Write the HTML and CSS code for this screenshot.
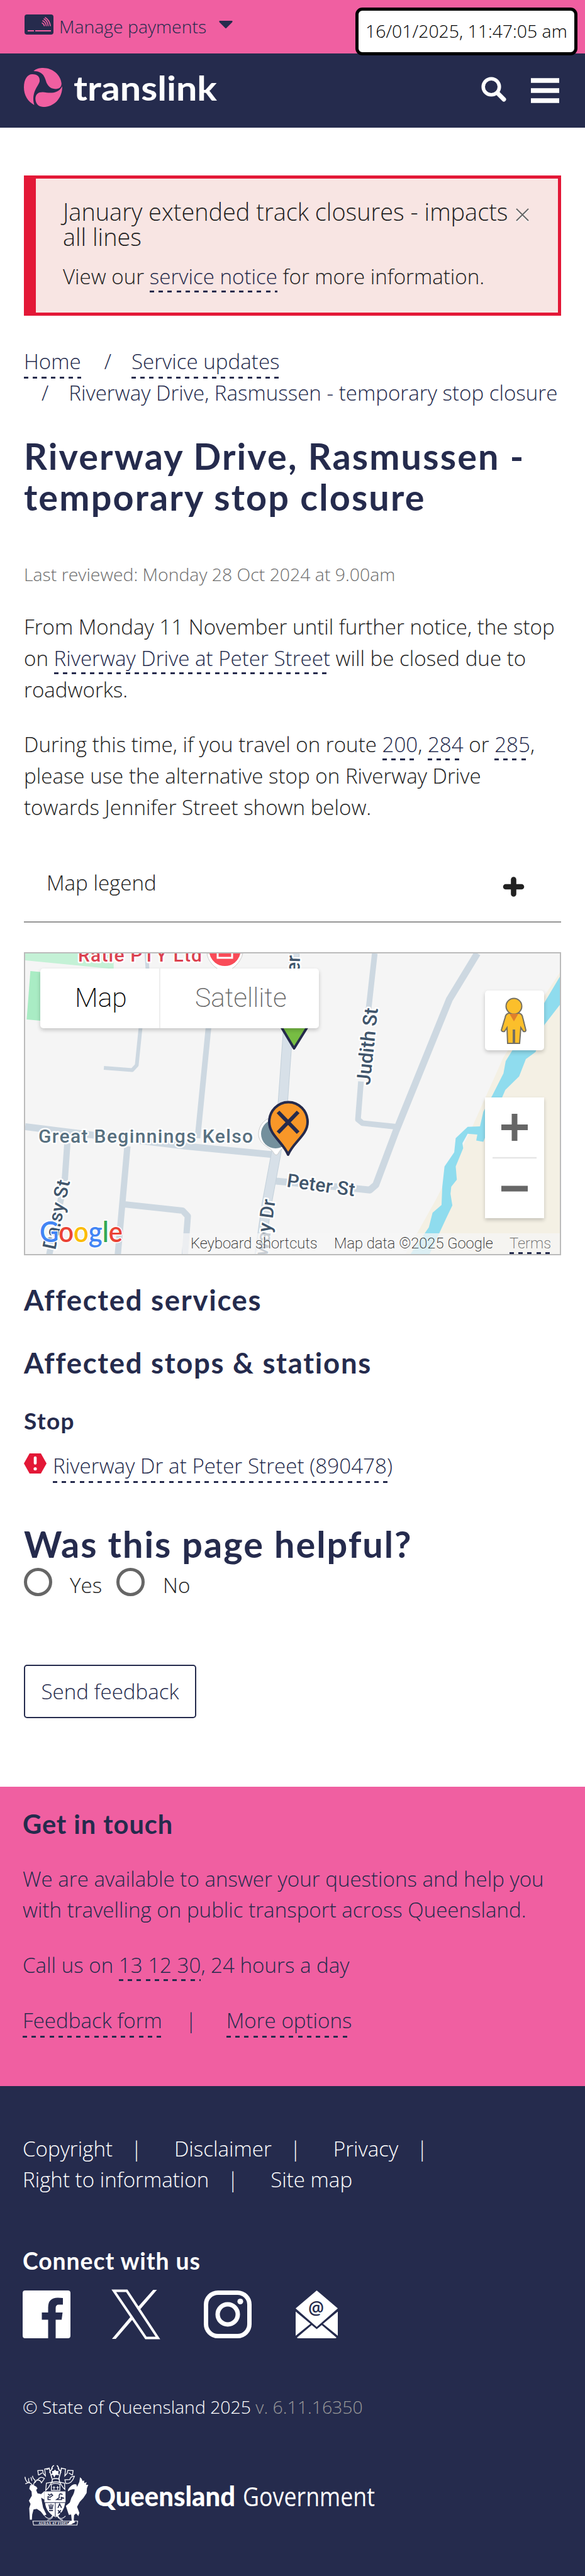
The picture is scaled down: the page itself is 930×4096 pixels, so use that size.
FILE: index.html
```html
<!DOCTYPE html>
<html lang="en">
<head>
<meta charset="utf-8">
<title>Riverway Drive, Rasmussen - temporary stop closure | Translink</title>
<link rel="stylesheet" href="styles.css">
</head>
<body>
<div class="topbar">
  <svg class="card-icon" viewBox="0 0 46 32"><rect width="46" height="32" rx="4" fill="#262b4d"/><g fill="none" stroke="#f05fa1" stroke-width="1.6" stroke-linecap="round"><path d="M28 13.500q3 1.500 3.500 4.500"/><path d="M29 10q5 2.500 5.500 8"/><path d="M31 7q6 4 6.500 11"/><path d="M33 5q7 4.500 8 13"/></g><path d="M5 26h10M17 26h25" stroke="#f05fa1" stroke-width="2.200"/></svg>
  <span class="manage">Manage payments</span>
  <svg class="caret" viewBox="0 0 22 12"><path d="M1.500 0h19q2 .5.500 2.500L12 11.500q-1 1-2 0L1 2.500Q-.5.500 1.500 0z" fill="#262b4d"/></svg>
  <div class="stamp">16/01/2025, 11:47:05 am</div>
</div>
<header class="header">
  <svg class="brand" viewBox="0 0 310 64">
    <g fill="#f05fa1" transform="scale(.61 .62)">
      <path d="M25 8C32 2 41 0 50 0C75 0 96 18 98 40C98 49 92 54 83 54C72 54 65 49 60 40C55 29 54 8 25 8z"/>
      <path d="M22 16C36 16 42 23 41 34C39 46 18 62 27 95C10 86 0 70 0 50C0 29 9 16 22 16z"/>
      <path d="M100 47C100 78 79 100 50 100C36 100 30 90 30 78C31 67 37 62 49 62C67 64 88 68 100 47z"/>
    </g>
    <text class="brand-text" x="79" y="51.500" textLength="228" lengthAdjust="spacingAndGlyphs">translink</text>
  </svg>
  <svg class="search" viewBox="0 0 40 40"><circle cx="16" cy="16" r="12.800" fill="none" stroke="#fff" stroke-width="5.600"/><path d="M26 26l10 10" stroke="#fff" stroke-width="7" stroke-linecap="round"/></svg>
  <svg class="burger" viewBox="0 0 45 40"><path d="M0 4h45M0 20h45M0 36h45" stroke="#fff" stroke-width="7.400"/></svg>
</header>
<main class="main">
  <section class="alert">
    <div class="alert-body">
      <h2 class="alert-title">January extended track closures - impacts<br>all lines</h2>
      <p class="alert-text">View our <a>service notice</a> for more information.</p>
    </div>
    <svg class="close" viewBox="0 0 22 22"><path d="M1 2.500l20 20M21 2.500l-20 20" stroke="#fff" stroke-width="2"/><path d="M1 1l20 20M21 1L1 21" stroke="#666" stroke-width="2"/></svg>
  </section>
  <nav class="crumbs">
    <div class="crumb-row"><a>Home</a><span class="slash">/</span><a>Service updates</a></div>
    <div class="crumb-row second"><span class="slash">/</span><span class="crumb-last">Riverway Drive, Rasmussen - temporary stop closure</span></div>
  </nav>
  <h1 class="title">Riverway Drive, Rasmussen -<br>temporary stop closure</h1>
  <p class="reviewed">Last reviewed: Monday 28 Oct 2024 at 9.00am</p>
  <p class="para p1">From Monday 11 November until further notice, the stop<br>on <a>Riverway Drive at Peter Street</a> will be closed due to<br>roadworks.</p>
  <p class="para p2">During this time, if you travel on route <a>200</a>, <a>284</a> or <a>285</a>,<br>please use the alternative stop on Riverway Drive<br>towards Jennifer Street shown below.</p>
  <div class="legend"><span>Map legend</span>
    <svg class="plus" viewBox="0 0 33 30"><path d="M16.500 3.500v23M4 15h25" stroke="#222" stroke-width="8.600" stroke-linecap="round"/></svg>
  </div>
  <div class="map">
    <svg class="map-art" viewBox="0 0 850 478">
      <rect width="850" height="478" fill="#f5f5f5"/>
      <g transform="translate(-40.300 -15.500) scale(.5931 .3221)">
        <path d="M68 48H305V125L68 82z" fill="#c4f1d6"/>
        <path d="M82 135L140 145L118 382L72 374z" fill="#a9ecc4"/>
        <path d="M1502 140L1350 560L1260 930L1170 1260L1085 1540H1502z" fill="#f4f0e4"/>
        <path d="M1502 160V300L1460 400L1436 535L1410 570L1392 655L1355 722L1325 850L1296 978L1277 972L1280 942L1254 938L1240 985L1242 1010L1222 1100L1225 1165L1210 1200L1208 1235L1213 1292L1198 1350L1150 1540H1098L1150 1400L1160 1328L1184 1290L1186 1200L1192 1100L1218 1030L1222 960L1254 904L1287 902L1296 830L1320 750L1350 640L1356 580L1376 520L1460 290z" fill="#8fdcee"/>
        <g class="road" fill="none" stroke="#cdd8e1">
          <path d="M393 48L396 130M378 400L367 600L355 624L279 613" stroke-width="6"/>
          <path d="M560 400L530 960M1005 48L988 330M968 680L960 868L972 886L1065 904" stroke-width="9"/>
          <path d="M1280 48L1205 275L1062 925L1008 1190L992 1216L950 1208L740 1172" stroke-width="11"/>
          <path d="M68 903L250 945L500 1000L735 1042" stroke-width="11"/>
          <path d="M181 985L174 1170L132 1540M342 1000L316 1540M330 1286L490 1318L504 1345L496 1540" stroke-width="10"/>
        </g>
        <g fill="none"><path class="road" d="M790 48L772 440L758 800L740 1042L715 1290L696 1540" stroke="#c3d0da" stroke-width="16"/><path class="road" d="M790 48L772 440L758 800L740 1042L715 1290L696 1540" stroke="#d7e0e8" stroke-width="14"/></g>
      </g>
      <g class="map-label">
        <text x="84" y="12.500" fill="#db4150" font-size="30" textLength="197">Ratie PTY Ltd</text>
        <path d="M289 0C291 16 308 28 318 30C330 26 343 14 346 0z" fill="#fff" stroke="#ccc"/><path d="M293 0a25 25 0 0 0 49 0z" fill="#f94b58"/><path d="M306 0v7h23v-7" fill="none" stroke="#fff" stroke-width="3"/>
        <text transform="translate(436 33) rotate(-88)" x="-13" font-size="31">ver</text>
        <text transform="translate(548 210) rotate(-84)" font-size="31" textLength="123">Judith St</text>
        <text transform="translate(415 371) rotate(8)" font-size="30" textLength="109">Peter St</text>
        <text transform="translate(48 472) rotate(-78)" font-size="30" textLength="112">Daisy St</text>
        <text transform="translate(385 482) rotate(-82)" font-size="30">way Dr</text>
        <text x="21" y="301" font-size="30" fill="#587080" textLength="341">Great Beginnings Kelso</text>
      </g>
      <path d="M371 287a27 27 0 0 1 54 0C425 305 406 308 403 317q-4 7-8 0C390 307 371 305 371 287z" fill="#fff" stroke="#ccc"/>
      <circle cx="398" cy="287" r="23" fill="#74909d"/>
      <path d="M403 110L427.500 151L453 110z" fill="#77bd43" stroke="#252b4d" stroke-width="4" stroke-linejoin="round"/>
      <path d="M418 320C410 300 388 289 388 268a30 31 0 0 1 61 0C449 289 426 300 418 320z" fill="#f89728" stroke="#252b4d" stroke-width="4" stroke-linejoin="round"/>
      <path d="M402 252l32 33M434 252l-32 33" stroke="#252b4d" stroke-width="6"/>
      <text class="google" x="23" y="459" textLength="132" lengthAdjust="spacingAndGlyphs"><tspan fill="#4285f4">G</tspan><tspan fill="#ea4335">o</tspan><tspan fill="#fbbc04">o</tspan><tspan fill="#4285f4">g</tspan><tspan fill="#34a853">l</tspan><tspan fill="#ea4335">e</tspan></text>
    </svg>
    <div class="map-type"><div class="mt map-on">Map</div><div class="mt">Satellite</div></div>
    <div class="pegman"><svg viewBox="0 0 42 74"><g fill="#fbbf2b" stroke="#757062" stroke-width="2"><path d="M13 25h16q5 1 6 7l5 20q0 3-4 2l-4-6-2 25H22V52h-2v21H11L10 48l-4 6q-4 1-5-2L7 32q1-6 6-7z"/><circle cx="21" cy="14" r="12.500"/></g><path d="M14 26h14l-7 12z" fill="#e07f2c"/></svg></div>
    <div class="zoomer"><svg viewBox="0 0 94 192"><path d="M26 47.500h42M47 26v43M26 145h42" stroke="#666" stroke-width="9"/><path d="M12 96h70" stroke="#e6e6e6" stroke-width="2.500"/></svg></div>
    <div class="map-credit"><span class="k1">Keyboard shortcuts</span><span class="k2">Map data ©2025 Google</span><a class="k3">Terms</a></div>
  </div>
  <h2 class="h2 h2a">Affected services</h2>
  <h2 class="h2 h2b">Affected stops &amp; stations</h2>
  <h3 class="h3">Stop</h3>
  <div class="stop-row">
    <svg class="warn" viewBox="0 0 36 32"><path d="M9 0h18l9 16-9 16H9L0 16z" fill="#e31837"/><path d="M18 7v8.500" stroke="#fff" stroke-width="4.600" stroke-linecap="round"/><circle cx="18" cy="24.500" r="2.600" fill="#fff"/></svg>
    <a>Riverway Dr at Peter Street (890478)</a>
  </div>
  <h2 class="title helpful">Was this page helpful?</h2>
  <div class="radios"><i class="radio"></i><span class="yes">Yes</span><i class="radio"></i><span class="no">No</span></div>
  <button class="send">Send feedback</button>
</main>
<section class="touch">
  <h2 class="touch-title">Get in touch</h2>
  <p class="touch-p">We are available to answer your questions and help you<br>with travelling on public transport across Queensland.</p>
  <p class="touch-call">Call us on <a>13 12 30</a>, 24 hours a day</p>
  <p class="touch-links"><a>Feedback form</a><span class="bar">|</span><a>More options</a></p>
</section>
<footer class="footer">
  <div class="flinks"><span>Copyright</span><span class="fbar">|</span><span>Disclaimer</span><span class="fbar">|</span><span>Privacy</span><span class="fbar">|</span></div>
  <div class="flinks"><span>Right to information</span><span class="fbar">|</span><span>Site map</span></div>
  <h3 class="connect">Connect with us</h3>
  <div class="social">
    <svg class="fb" viewBox="0 0 76 76"><path d="M4 0h68q4 0 4 4v68q0 4-4 4H52.500V46.500H62L63.500 35H52.500V28q0-5.500 5-5.500H64V12Q60 11.500 56 11.500Q40.500 11.500 40.500 27v8H30.500v11.500h10V76H4q-4 0-4-4V4Q0 0 4 0z" fill="#fff"/></svg>
    <svg class="xx" viewBox="0 0 77 78"><path d="M3 1.500h20.500L73 76.500H54z" fill="none" stroke="#fff" stroke-width="4"/><path d="M71.500 0L44 32l-3-4.500L65.500 0zM0 78L31.500 40.500l3 4.500L6 78z" fill="#fff"/></svg>
    <svg class="insta" viewBox="0 0 76 76" fill="none" stroke="#fff"><rect x="3.500" y="3.500" width="69" height="69" rx="19" stroke-width="7"/><circle cx="38" cy="38" r="16" stroke-width="7"/><circle cx="58" cy="17.500" r="4.600" fill="#fff" stroke="none"/></svg>
    <svg class="mail" viewBox="0 0 67 76"><path d="M33.500 0L67 28.500L33.500 58L0 28.500z" fill="#fff"/><path d="M0 33.500L23.500 53L0 72zM67 33.500L43.500 53L67 72zM2 75L25.500 55L33.500 61.500L41.500 55L65 75q-1 1-2 1H4q-1 0-2-1z" fill="#fff"/><text x="20" y="38" class="at">@</text></svg>
  </div>
  <p class="copy"><span>© State of Queensland 2025</span> <span class="ver">v. 6.11.16350</span></p>
  <div class="gov">
    <svg class="crest" viewBox="24 34 396 370" fill="#fff">
      <path d="M62 158l18-2 20 12 6 10-8 10 8 20 22 4 20-18v52l-20-12 4 20 8 40 20 42-14 8-20-26-24-16-20 4-8 30-2 32H60l-4-70 8-26-10-20 18-30-2-26-14-16z"/>
      <g fill="none" stroke="#fff" stroke-width="5"><path d="M76 158Q60 140 44 140Q32 128 30 108M54 142l-22 8M58 142q-10-14-4-26M82 158Q84 140 96 134M76 102q0 16 14 24l2 18M104 124l-12 16M66 110l6 22"/>
      <path d="M112 98l-4-28 30-2 2 18 14 16-4-42 26-4M112 98l22-14M106 128q16-28 42-10l-18 26q-8-20-24-16zM318 98l4-28-32-2-4 18-14 16 4-42-24-4M318 98l-22-14M330 104q-24 0-28 20l-30 2 6 22q36 4 52-44z"/>
      <path d="M176 52q10 38 18 66M252 52q-8 38-16 66M206 38q-16 10-14 28M224 38q12 12 12 30M160 64l18-8M178 82l20-28M250 82L230 54M196 122q20-8 42 0l2 20q-22-8-46 0z" stroke-width="6"/>
      <path d="M160 146l32-6-20 34-16 16 4-44zM270 146l-30-6 22 34 10 10zM190 190v-36q24-14 52 0v36z"/>
      <path d="M206 164v22M198 172h16M228 164v22M220 172h16M150 345q34 34 50-10q4 28-34 36M276 345q-34 34-50-10q0 28 34 36M78 376H350l-4 24H82z" stroke-width="4"/></g>
      <path d="M194 72h10l8-8 8 8h14l-2 14 6 12-22-2-8 16-8-16-16 2 12-12zM148 196h128v66H148zM152 266h60v86q-54-30-60-86zM216 266h58q-8 60-58 88z"/>
      <path d="M292 184q26-38 50-30l4 14 14-30 4-28 10 10 6 14 8-6 2 18 14-6-4 16 14 0-8 20-2 30-20 30-22 24-16 30 14 36-6 20-14-16-12 10-2 30 8 14-28 12-20 2 14-18 14-6-4-38-14 2-18-54 24-20 10-30q16-22 20-50-22-6-42 12z"/>
      <g fill="none" stroke="#252b4d" stroke-width="6"><path d="M170 212l10 8 10-8 8 8-16 12-12-4 0 18h16M258 216q-24-16-20 18l-16 12 30 0-2-14 18 6M176 276l6 28M188 272v32M200 276l-6 28M176 312h24M230 310l18 20M248 310l-18 20M230 296l10-24 12 24"/></g>
      <text x="112" y="395" textLength="204" class="motto">AUDAX AT FIDELIS</text>
    </svg>
    <svg class="govt" viewBox="0 0 450 60"><text class="q1" x="0" y="40" textLength="224" lengthAdjust="spacingAndGlyphs">Queensland</text><text class="q2" x="236" y="40" textLength="210" lengthAdjust="spacingAndGlyphs">Government</text></svg>
  </div>
</footer>
</body>
</html>
```
FILE: styles.css
```css
* { box-sizing: border-box; }
body { margin: 0; width: 930px; background: #fff; font-family: "Open Sans", "Noto Sans", sans-serif; font-weight: 300; font-size: 33.12px; line-height: 49.8px; color: #222; }
h1, h2, h3, p { margin: 0; }
svg { display: block; flex: none; overflow: visible; }
a { color: #252b4d; padding-bottom: 3px; background: repeating-linear-gradient(90deg, #252b4d 0 7.1px, transparent 7.1px 14.2px) left bottom / 100% 3px no-repeat; }
.topbar { position: relative; height: 85px; background: #f05fa1; display: flex; padding-left: 39px; color: #252b4d; font-size: 28.4px; line-height: 40px; }
.card-icon { width: 46px; height: 32px; margin-top: 23px; }
.manage { margin: 22px 0 0 9px; width: 235px; white-space: nowrap; }
.caret { width: 22px; height: 12px; margin: 33px 0 0 19px; }
.stamp { position: absolute; left: 565px; top: 12px; width: 353px; height: 76px; border: 5px solid #000; border-radius: 11px; background: #fff; color: #000; line-height: 63px; padding-top: 1px; padding-left: 11px; white-space: nowrap; z-index: 2; }
.header { height: 118px; background: #252b4d; display: flex; align-items: flex-start; padding-left: 38px; }
.brand { width: 310px; height: 64px; margin-top: 23px; }
.brand-text { font-family: Lato, sans-serif; font-weight: 700; font-size: 54px; fill: #fff; }
.search { width: 40px; height: 40px; margin: 37px 0 0 417px; }
.burger { width: 45px; height: 40px; margin: 39px 0 0 39px; }
.main { padding: 76px 38px 0; height: 2638px; }
.alert { height: 223px; border: 5px solid #e31837; border-left-width: 19px; background: #f8e5e3; display: flex; padding: 47px 0 0 43px; }
.alert-body { width: 720px; white-space: nowrap; }
.alert-title { font-size: 37.86px; line-height: 39.8px; font-weight: 300; margin-top: -14px; }
.alert-text { margin-top: 18.5px; }
.close { width: 21px; height: 21px; }
.crumbs { margin-top: 48px; color: #252b4d; }
.crumb-row { display: flex; height: 49.8px; align-items: flex-start; }
.crumb-row a, .touch-links a { line-height: 45px; height: 49.400px; margin-top: 2.400px; }
.slash { margin: 0 32px 0 37px; }
.second .slash { margin-left: 28px; }
.title { font-family: Lato, sans-serif; font-weight: 700; font-size: 57.6px; line-height: 64.3px; letter-spacing: 2.15px; color: #252b4d; margin-top: 43.7px; white-space: nowrap; }
.reviewed { font-size: 28.4px; line-height: 42.6px; color: #6d6d6d; margin-top: 70px; }
.para { white-space: nowrap; }
.p1 { margin-top: 37.5px; }
.p2 { margin-top: 37.9px; }
.legend { margin-top: 70.5px; height: 87.500px; border-bottom: 2px solid #969696; padding-left: 36px; display: flex; justify-content: space-between; }
.plus { width: 33px; height: 30px; margin: 16px 59px 0 0; }
.map { position: relative; margin-top: 47px; height: 482px; border: 2px solid #bbb; overflow: hidden; font-family: Roboto, sans-serif; }
.map-art { width: 850px; height: 478px; }
.road { stroke-linejoin: round; }
.road path, path.road { vector-effect: non-scaling-stroke; }
.map-label { font-family: Roboto, sans-serif; font-weight: 500; fill: #41566c; }
.map-label text { stroke: #fff; stroke-width: 5px; paint-order: stroke; stroke-linejoin: round; }
.google { font-family: Lato, sans-serif; font-weight: 600; font-size: 47px; stroke: #fff; stroke-width: 3px; paint-order: stroke; }
.map-type { position: absolute; left: 24px; top: 24px; height: 95px; width: 443px; display: flex; background: #fff; border-radius: 5px; box-shadow: 0 3px 6px rgba(0,0,0,.2); font-size: 42.6px; font-weight: 200; line-height: 93px; color: #666; }
.mt { padding-left: 55px; }
.map-on { width: 191px; color: #000; border-right: 2px solid #eee; }
.pegman { position: absolute; left: 731px; top: 59px; width: 94px; height: 95px; background: #fff; border-radius: 5px; box-shadow: 0 3px 6px rgba(0,0,0,.2); }
.pegman svg { width: 42px; height: 74px; margin: 11px 0 0 25px; }
.zoomer { position: absolute; left: 731px; top: 229px; width: 94px; height: 192px; background: #fff; box-shadow: 0 3px 6px rgba(0,0,0,.2); }
.map-credit { position: absolute; right: 0; bottom: 0; width: 600px; height: 33px; background: rgba(245,245,245,.75); font-size: 23.7px; font-weight: 200; line-height: 33px; white-space: nowrap; display: flex; color: #222; }
.k1 { width: 228px; margin-left: 13px; }
.k2 { width: 279px; }
.k3 { color: #666; width: 65px; }
.h2 { font-family: Lato, sans-serif; font-weight: 700; font-size: 45.5px; line-height: 60px; letter-spacing: 1.7px; color: #252b4d; }
.h2a { margin-top: 41.5px; }
.h2b { margin-top: 39.4px; }
.h3 { font-family: Lato, sans-serif; font-weight: 700; font-size: 37px; line-height: 48px; letter-spacing: 1.4px; color: #252b4d; margin-top: 38.9px; }
.stop-row { margin-top: 22.5px; height: 49.8px; display: flex; align-items: flex-start; white-space: nowrap; }
.warn { width: 36px; height: 32px; margin: 5px 10px 0 0; }
.stop-row a { line-height: 45px; height: 49.400px; margin-top: 2.400px; letter-spacing: .04px; }
.helpful { margin-top: 67.6px; letter-spacing: 2px; }
.radios { margin-top: 5.700px; height: 44.6px; display: flex; line-height: 49.7px; }
.radio { width: 45px; height: 45px; border: 5px solid #666; border-radius: 50%; flex: none; }
.yes { width: 74px; margin: 3px 0 0 28px; }
.no { margin: 3px 0 0 29px; }
.send { display: block; margin-top: 109.4px; width: 274px; height: 85px; border: 2px solid #252b4d; border-radius: 5px; background: #fff; color: #252b4d; font: inherit; line-height: 81px; padding: 0 0 2px; }
.touch { background: #f05fa1; color: #252b4d; height: 476px; padding: 34px 36px 0; white-space: nowrap; }
.touch-title { font-family: Lato, sans-serif; font-weight: 700; font-size: 41.6px; line-height: 50px; letter-spacing: .95px; }
.touch-p { margin-top: 37.5px; }
.touch-call { margin-top: 37.9px; }
.touch-links { margin-top: 38.3px; display: flex; align-items: flex-start; }
.bar { margin: 0 47px 0 37px; }
.footer { background: #252b4d; color: #fff; height: 779px; padding: 74.5px 36px 0; white-space: nowrap; }
.flinks { display: flex; height: 49.7px; }
.fbar { margin: 0 51px 0 29px; }
.connect { font-family: Lato, sans-serif; font-weight: 700; font-size: 37.4px; line-height: 48px; letter-spacing: .9px; margin-top: 80.5px; }
.social { display: flex; margin-top: 22.6px; height: 76px; }
.fb, .insta { width: 76px; height: 76px; }
.xx { width: 77px; height: 78px; margin: -1px 69px 0 66px; }
.mail { width: 67px; height: 76px; margin-left: 70px; }
.at { font-family: "Open Sans", sans-serif; font-size: 28px; font-weight: 600; fill: #252b4d; }
.copy { font-size: 28.4px; line-height: 42.6px; margin-top: 87.7px; }
.ver { color: #999; }
.gov { display: flex; margin-top: 70.7px; }
.crest { width: 104px; height: 97px; margin-left: 2px; }
.motto { font: 700 20px "Liberation Serif", serif; }
.govt { width: 450px; height: 60px; margin: 26px 0 0 8px; }
.q1 { font: 900 43px Lato, sans-serif; fill: #fff; }
.q2 { font: 400 42px "Open Sans", sans-serif; fill: #fff; }
```
